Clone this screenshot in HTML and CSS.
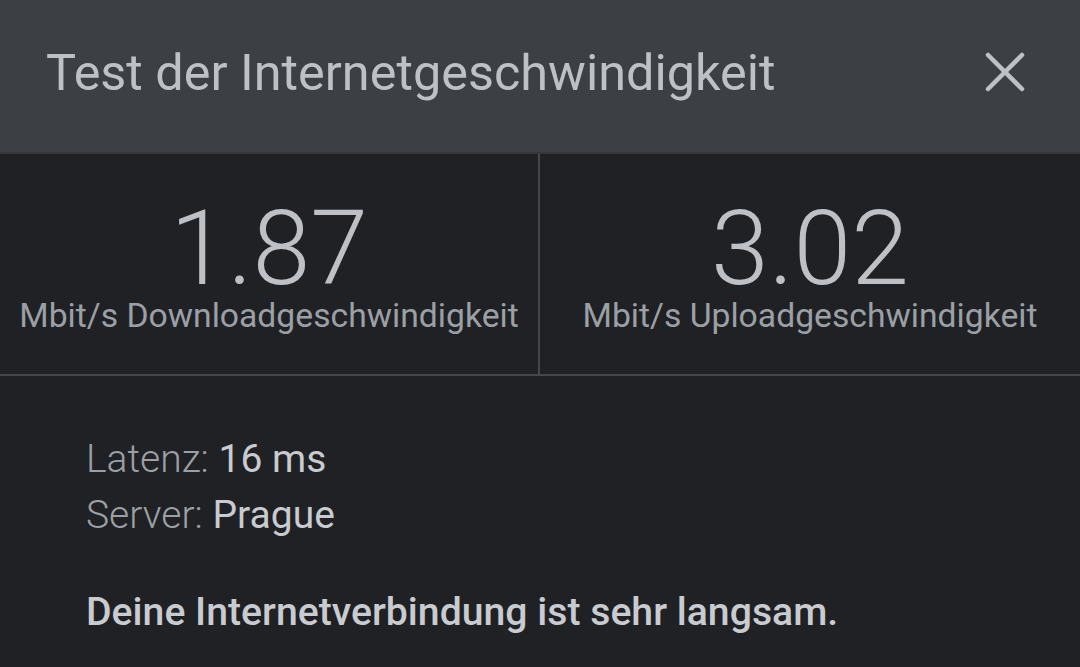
FILE: index.html
```html
<!DOCTYPE html>
<html lang="de">
<head>
<meta charset="utf-8">
<link rel="stylesheet" href="styles.css">
</head>
<body>
<div class="dialog">
  <header class="head">
    <h1 class="title">Test der Internetgeschwindigkeit</h1>
    <button class="close" aria-label="Schließen">
      <svg width="40" height="40" viewBox="0 0 40 40"><path d="M3 3 L37 37 M37 3 L3 37" stroke="#bdc1c6" stroke-width="4.5" stroke-linecap="round" fill="none"/></svg>
    </button>
  </header>
  <section class="speeds">
    <div class="speed">
      <div class="num">1.87</div>
      <div class="unit">Mbit/s Downloadgeschwindigkeit</div>
    </div>
    <div class="speed">
      <div class="num">3.02</div>
      <div class="unit">Mbit/s Uploadgeschwindigkeit</div>
    </div>
  </section>
  <section class="details">
    <div class="row"><span class="key">Latenz:</span> <span class="val">16 ms</span></div>
    <div class="row"><span class="key">Server:</span> <span class="val">Prague</span></div>
    <p class="verdict">Deine Internetverbindung ist sehr langsam.</p>
  </section>
</div>
</body>
</html>
```
FILE: styles.css
```css
html, body {
  margin: 0;
  padding: 0;
  background: #202124;
  font-family: Roboto, "Noto Sans", sans-serif;
}
.dialog {
  width: 1080px;
  height: 667px;
  overflow: hidden;
  background: #202124;
}
.head {
  height: 154px;
  background: #3c3f43;
  display: flex;
  align-items: center;
  justify-content: space-between;
  padding: 0 55px 8px 46px;
  box-sizing: border-box;
  border-bottom: 2px solid #35373b;
}
.title {
  margin: 0;
  font-weight: 400;
  font-size: 50.4px;
  color: #bdc1c6;
  letter-spacing: 0;
}
.close {
  background: none;
  border: 0;
  padding: 0;
  width: 40px;
  height: 40px;
  display: flex;
}
.speeds {
  display: grid;
  grid-template-columns: 540px 1fr;
  height: 220px;
  border-bottom: 2px solid #44474b;
}
.speed {
  display: flex;
  flex-direction: column;
  align-items: center;
  padding-top: 44px;
}
.speed:first-child {
  border-right: 2px solid #44474b;
}
.num {
  font-weight: 300;
  font-size: 104px;
  line-height: 101px;
  color: #bdc1c6;
}
.unit {
  font-size: 33.7px;
  line-height: 34px;
  color: #9aa0a6;
}
.details {
  padding: 55px 0 0 86px;
}
.row {
  font-size: 39px;
  line-height: 56px;
}
.key {
  font-weight: 300;
  color: #9aa0a6;
}
.val {
  color: #c8cbcf;
}
.verdict {
  margin: 46px 0 0;
  font-size: 39.2px;
  font-weight: 500;
  color: #c8cbcf;
}
```
